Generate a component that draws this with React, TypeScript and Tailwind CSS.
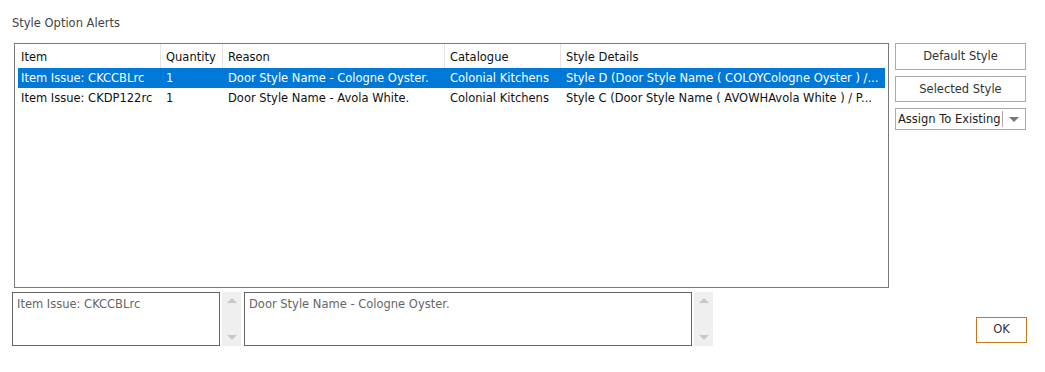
const rows = [
  {
    item: 'Item Issue: CKCCBLrc',
    qty: '1',
    reason: 'Door Style Name - Cologne Oyster.',
    catalogue: 'Colonial Kitchens',
    details: 'Style D (Door Style Name ( COLOYCologne Oyster ) /...',
  },
  {
    item: 'Item Issue: CKDP122rc',
    qty: '1',
    reason: 'Door Style Name - Avola White.',
    catalogue: 'Colonial Kitchens',
    details: 'Style C (Door Style Name ( AVOWHAvola White ) / P...',
  },
]

const cols = ['w-[145px]', 'w-[62px]', 'w-[222px]', 'w-[116px]', 'flex-1']
const headers = ['Item', 'Quantity', 'Reason', 'Catalogue', 'Style Details']

const Scroller = () => (
  <div className="w-[19px] h-[54px] bg-[#efefef] flex flex-col items-center justify-between py-[6px]">
    <span className="w-0 h-0 border-x-[5px] border-x-transparent border-b-[5px] border-b-[#c8c8c8]" />
    <span className="w-0 h-0 border-x-[5px] border-x-transparent border-t-[5px] border-t-[#c8c8c8]" />
  </div>
)

export default function App() {
  return (
    <div
      className="w-[1045px] h-[372px] bg-white text-[11.5px] text-[#222]"
      style={{ fontFamily: '"DejaVu Sans", Tahoma, sans-serif' }}
    >
      <div className="pl-3 pt-[15px] h-[43px] text-[#444]">Style Option Alerts</div>

      <div className="flex pl-[14px]">
        <div className="w-[875px] h-[245px] border border-[#7a7a7a] px-[3px]">
          <div className="flex h-[24px] text-[#111]">
            {headers.map((h, i) => (
              <div key={h} className={`${cols[i]} flex h-full`}>
                <span className="flex-1 pl-[3px] pt-[5px]">{h}</span>
                {i < 4 && <span className="w-px h-full bg-[#e4e4e4] mr-[2px]" />}
              </div>
            ))}
          </div>
          {rows.map((r, idx) => (
            <div
              key={r.item}
              className={`flex h-[20px] items-center pt-px whitespace-nowrap ${idx === 0 ? 'bg-[#0078d7] text-white' : 'text-[#111]'}`}
            >
              {[r.item, r.qty, r.reason, r.catalogue, r.details].map((c, i) => (
                <div key={i} className={`${cols[i]} pl-[3px] overflow-hidden`}>
                  {c}
                </div>
              ))}
            </div>
          ))}
        </div>

        <div className="ml-[6px] w-[131px] flex flex-col gap-[6px]">
          <div className="h-[27px] pt-px border border-[#ababab] flex items-center justify-center text-[#333]">Default Style</div>
          <div className="h-[26px] pt-px border border-[#ababab] flex items-center justify-center text-[#333]">Selected Style</div>
          <div className="h-[22px] border border-[#ababab] flex items-center text-[#222]">
            <span className="flex-1 pl-[2px] whitespace-nowrap overflow-hidden border-r border-[#aaa] leading-[16px]">Assign To Existing</span>
            <span className="w-[22px] flex justify-center">
              <span className="w-0 h-0 border-x-[5px] border-x-transparent border-t-[5px] border-t-[#777]" />
            </span>
          </div>
        </div>
      </div>

      <div className="flex items-start pl-3 mt-[4px]">
        <div className="w-[208px] h-[54px] border border-[#666] px-[4px] pt-[3px] text-[#666]">Item Issue: CKCCBLrc</div>
        <div className="ml-[2px]"><Scroller /></div>
        <div className="ml-[3px] w-[448px] h-[54px] border border-[#666] px-[4px] pt-[3px] text-[#666]">Door Style Name - Cologne Oyster.</div>
        <div className="ml-[2px]"><Scroller /></div>
        <div className="flex-1" />
        <div className="mt-[25px] mr-[18px] w-[51px] h-[26px] border border-[#c27a1d] flex items-center justify-center text-[#333]">OK</div>
      </div>
    </div>
  )
}
